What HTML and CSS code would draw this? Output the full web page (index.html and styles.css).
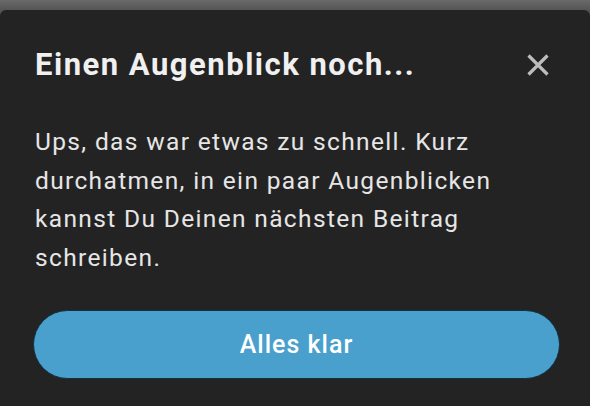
FILE: index.html
```html
<!DOCTYPE html>
<html lang="de">
<head>
<meta charset="utf-8">
<link rel="stylesheet" href="styles.css">
</head>
<body>
<div class="dialog">
  <div class="header">
    <h1 class="title">Einen Augenblick noch...</h1>
    <button class="close" aria-label="Schließen">
      <svg width="24" height="24" viewBox="0 0 24 24"><path d="M2.5 2.5 L21.5 21.5 M21.5 2.5 L2.5 21.5" stroke="#bdbdbd" stroke-width="3.2" stroke-linecap="butt" fill="none"/></svg>
    </button>
  </div>
  <p class="message">Ups, das war etwas zu schnell. Kurz durchatmen, in ein paar Augenblicken kannst Du Deinen nächsten Beitrag schreiben.</p>
  <button class="primary">Alles klar</button>
</div>
</body>
</html>
```
FILE: styles.css
```css
html, body {
  margin: 0;
  padding: 0;
  height: 100%;
}
body {
  background: linear-gradient(#6a6a6a, #555555 10px);
  font-family: Roboto, "Liberation Sans", sans-serif;
  overflow: hidden;
}
.dialog {
  margin-top: 10px;
  background: #232323;
  border-radius: 6px 6px 0 0;
  height: calc(100% - 10px);
  box-sizing: border-box;
  padding: 35px 30px 0 35px;
  display: flex;
  flex-direction: column;
}
.header {
  display: flex;
  align-items: center;
  justify-content: space-between;
  height: 40px;
}
.title {
  margin: 0;
  font-size: 31px;
  font-weight: 700;
  line-height: 40px;
  letter-spacing: 1.5px;
  color: #f0f0f0;
}
.close {
  background: none;
  border: 0;
  padding: 0;
  margin-right: 10px;
  width: 24px;
  height: 24px;
  display: flex;
}
.message {
  margin: 38px 0 0 0;
  font-size: 24.5px;
  line-height: 38.5px;
  letter-spacing: 1.35px;
  color: #e6e6e6;
  padding-right: 20px;
}
.primary {
  margin: 33px 0 0 -2px;
  height: 69px;
  border-radius: 35px;
  background: #4aa0cc;
  border: 1px solid #12303f;
  color: #ffffff;
  font-family: Roboto, "Liberation Sans", sans-serif;
  font-size: 25px;
  font-weight: 500;
  letter-spacing: 1px;
  display: flex;
  align-items: center;
  justify-content: center;
}
```
